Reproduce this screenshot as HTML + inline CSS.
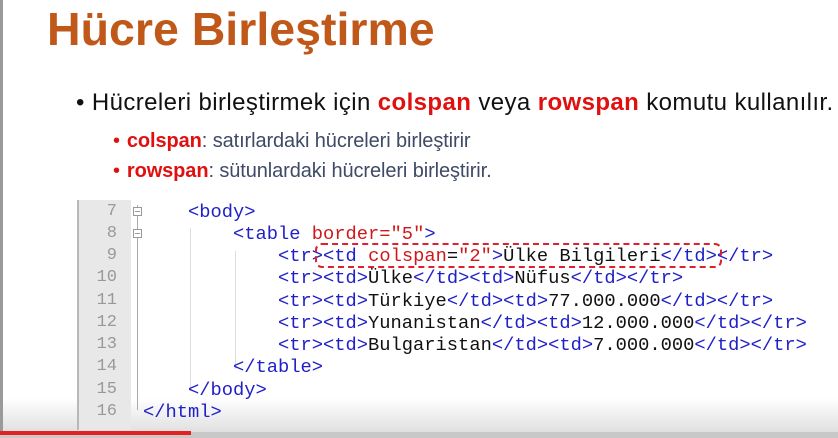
<!DOCTYPE html>
<html><head><meta charset="utf-8"><style>
*{margin:0;padding:0;box-sizing:border-box}
body{width:838px;height:438px;overflow:hidden;background:#fff;position:relative;font-family:"Liberation Sans",sans-serif}
.lb{position:absolute;left:0;top:0;width:3px;height:438px;background:#9a9a9a}
h1{position:absolute;left:47px;top:2px;font-size:46.5px;font-weight:bold;color:#c0581a;letter-spacing:0px;white-space:nowrap}
.b1{position:absolute;left:76px;top:89px;font-size:24px;color:#111;white-space:nowrap;letter-spacing:0.4px}
.r{color:#e01010;font-weight:bold}
.sb{position:absolute;left:113px;font-size:20px;color:#3e4a66;white-space:nowrap;letter-spacing:-0.1px}
.sb .d{color:#e01010;margin-right:7px}
.gut{position:absolute;left:77px;top:200px;width:54px;height:230px;background:#e8e8e8;border-left:2px solid #b8b8b8}
.fold{position:absolute;left:137px;top:205px;width:1px;height:205px;background:#aaa}
.fb{position:absolute;left:133px;width:9px;height:9px;border:1px solid #999;background:#fff}
.fb::after{content:"";position:absolute;left:1px;top:3px;width:5px;height:1px;background:#999}
.ln{position:absolute;left:80px;width:37px;text-align:right;font-family:"Liberation Mono",monospace;font-size:17px;color:#999}
.code{position:absolute;left:143px;font-family:"Liberation Mono",monospace;font-size:18.75px;white-space:pre;color:#111}
.t{color:#2020c8}.a{color:#d01818}
.g{position:absolute;width:1px;background:#ddd}
.box{position:absolute;left:315px;top:243px;width:407px;height:25px;border:2px dashed #e02030;border-radius:7px}
.bot{position:absolute;left:0;top:398px;width:838px;height:34px;background:linear-gradient(#fff,#e0e0e0)}
.bar{position:absolute;left:0;top:432px;width:838px;height:6px;background:#c8c8c8}
.red{position:absolute;left:0;top:431px;width:191px;height:4px;background:#e52020}
</style></head><body>
<div class="bot"></div>
<div class="lb"></div>
<h1>Hücre Birleştirme</h1>
<div class="b1">• Hücreleri birleştirmek için <span class="r">colspan</span> veya <span class="r">rowspan</span> komutu kullanılır.</div>
<div class="sb" style="top:130px"><span class="d">•</span><span class="r">colspan</span>: satırlardaki hücreleri birleştirir</div>
<div class="sb" style="top:160px"><span class="d">•</span><span class="r">rowspan</span>: sütunlardaki hücreleri birleştirir.</div>
<div class="gut"></div>
<div class="fold"></div>
<div class="fb" style="top:207px"></div>
<div class="fb" style="top:229px"></div>
<div class="g" style="left:190px;top:228px;height:163px"></div>
<div class="g" style="left:235px;top:251px;height:118px"></div>
<div class="ln" style="top:202px">7</div>
<div class="ln" style="top:224px">8</div>
<div class="ln" style="top:246px">9</div>
<div class="ln" style="top:268px">10</div>
<div class="ln" style="top:291px">11</div>
<div class="ln" style="top:313px">12</div>
<div class="ln" style="top:335px">13</div>
<div class="ln" style="top:357px">14</div>
<div class="ln" style="top:380px">15</div>
<div class="ln" style="top:402px">16</div>
<div class="code" style="top:201px">    <span class="t">&lt;body&gt;</span></div>
<div class="code" style="top:223px">        <span class="t">&lt;table</span> <span class="a">border="5"</span><span class="t">&gt;</span></div>
<div class="code" style="top:245px">            <span class="t">&lt;tr&gt;&lt;td</span> <span class="a">colspan</span>=<span class="a">"2"</span><span class="t">&gt;</span>Ülke Bilgileri<span class="t">&lt;/td&gt;&lt;/tr&gt;</span></div>
<div class="code" style="top:267px">            <span class="t">&lt;tr&gt;&lt;td&gt;</span>Ülke<span class="t">&lt;/td&gt;&lt;td&gt;</span>Nüfus<span class="t">&lt;/td&gt;&lt;/tr&gt;</span></div>
<div class="code" style="top:290px">            <span class="t">&lt;tr&gt;&lt;td&gt;</span>Türkiye<span class="t">&lt;/td&gt;&lt;td&gt;</span>77.000.000<span class="t">&lt;/td&gt;&lt;/tr&gt;</span></div>
<div class="code" style="top:312px">            <span class="t">&lt;tr&gt;&lt;td&gt;</span>Yunanistan<span class="t">&lt;/td&gt;&lt;td&gt;</span>12.000.000<span class="t">&lt;/td&gt;&lt;/tr&gt;</span></div>
<div class="code" style="top:334px">            <span class="t">&lt;tr&gt;&lt;td&gt;</span>Bulgaristan<span class="t">&lt;/td&gt;&lt;td&gt;</span>7.000.000<span class="t">&lt;/td&gt;&lt;/tr&gt;</span></div>
<div class="code" style="top:356px">        <span class="t">&lt;/table&gt;</span></div>
<div class="code" style="top:379px">    <span class="t">&lt;/body&gt;</span></div>
<div class="code" style="top:401px"><span class="t">&lt;/html&gt;</span></div>
<div class="box"></div>
<div class="bar"></div>
<div class="red"></div>
</body></html>
